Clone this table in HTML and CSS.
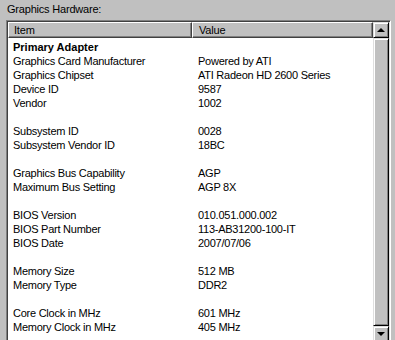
FILE: index.html
```html
<!DOCTYPE html>
<html lang="en">
<head>
  <meta charset="UTF-8">
  <title>Graphics Hardware</title>
  <link rel="stylesheet" href="styles.css">
</head>
<body>
  <div class="group">
    <div class="caption">Graphics Hardware:</div>
    <div class="listbox">
      <div class="list">
        <div class="header">
          <span class="col item">Item</span><span class="col value">Value</span>
        </div>
        <div class="rows">
          <div class="row title"><span>Primary Adapter</span><span></span></div>
          <div class="row"><span>Graphics Card Manufacturer</span><span>Powered by ATI</span></div>
          <div class="row"><span>Graphics Chipset</span><span>ATI Radeon HD 2600 Series</span></div>
          <div class="row"><span>Device ID</span><span>9587</span></div>
          <div class="row"><span>Vendor</span><span>1002</span></div>
          <div class="row blank"></div>
          <div class="row"><span>Subsystem ID</span><span>0028</span></div>
          <div class="row"><span>Subsystem Vendor ID</span><span>18BC</span></div>
          <div class="row blank"></div>
          <div class="row"><span>Graphics Bus Capability</span><span>AGP</span></div>
          <div class="row"><span>Maximum Bus Setting</span><span>AGP 8X</span></div>
          <div class="row blank"></div>
          <div class="row"><span>BIOS Version</span><span>010.051.000.002</span></div>
          <div class="row"><span>BIOS Part Number</span><span>113-AB31200-100-IT</span></div>
          <div class="row"><span>BIOS Date</span><span>2007/07/06</span></div>
          <div class="row blank"></div>
          <div class="row"><span>Memory Size</span><span>512 MB</span></div>
          <div class="row"><span>Memory Type</span><span>DDR2</span></div>
          <div class="row blank"></div>
          <div class="row"><span>Core Clock in MHz</span><span>601 MHz</span></div>
          <div class="row"><span>Memory Clock in MHz</span><span>405 MHz</span></div>
        </div>
      </div>
      <div class="scrollbar">
        <div class="btn"><span class="arrow up"></span></div>
        <div class="thumb"></div>
        <div class="btn"><span class="arrow down"></span></div>
      </div>
    </div>
  </div>
</body>
</html>
```

FILE: styles.css
```css
html,
body {
  margin: 0;
  padding: 0;
}

body {
  background-color: #c0c0c0;
  font-family: "Liberation Sans", Arial, sans-serif;
  font-size: 11px;
  color: #000;
  overflow: hidden;
  height: 340px;
}

.group {
  padding: 2px 0 0 6px;
}

.caption {
  height: 18px;
  line-height: 14px;
  padding-left: 1px;
  letter-spacing: -0.2px;
}

.listbox {
  display: flex;
  width: 381px;
  height: 330px;
  border-top: 1px solid #808080;
  border-left: 1px solid #808080;
  border-right: 1px solid #fff;
  box-shadow: inset 1px 1px 0 #404040, inset -1px 0 0 #dfdfdf;
  padding: 1px 1px 0 1px;
  background-color: #fff;
}

.list {
  flex: 1;
  display: flex;
  flex-direction: column;
}

.header {
  display: flex;
  height: 16px;
}

.header .col {
  box-sizing: border-box;
  height: 16px;
  line-height: 14px;
  padding-left: 5px;
  background-color: #c0c0c0;
  border-top: 1px solid #fff;
  border-left: 1px solid #fff;
  border-bottom: 1px solid #404040;
  border-right: 1px solid #404040;
  box-shadow: inset -1px -1px 0 #808080;
  letter-spacing: -0.2px;
}

.header .item {
  width: 184px;
}

.header .value {
  flex: 1;
  padding-left: 6px;
}

.rows {
  padding-top: 2px;
}

.row {
  display: grid;
  grid-template-columns: 185px 1fr;
  height: 14px;
  line-height: 14px;
  white-space: nowrap;
  letter-spacing: -0.25px;
}

.row span {
  padding-left: 5px;
}

.row.title {
  font-weight: bold;
  letter-spacing: 0;
}

.scrollbar {
  width: 16px;
  display: flex;
  flex-direction: column;
  background-color: #e0e0e0;
}

.btn,
.thumb {
  box-sizing: border-box;
  background-color: #c0c0c0;
  border-top: 1px solid #dfdfdf;
  border-left: 1px solid #dfdfdf;
  border-bottom: 1px solid #000;
  border-right: 1px solid #000;
  box-shadow: inset 1px 1px 0 #fff, inset -1px -1px 0 #808080;
}

.btn {
  height: 16px;
  display: flex;
  align-items: center;
  justify-content: center;
}

.thumb {
  height: 288px;
}

.arrow {
  width: 0;
  height: 0;
  border-left: 4px solid transparent;
  border-right: 4px solid transparent;
}

.arrow.up {
  border-bottom: 4px solid #000;
}

.arrow.down {
  border-top: 4px solid #000;
}
```
